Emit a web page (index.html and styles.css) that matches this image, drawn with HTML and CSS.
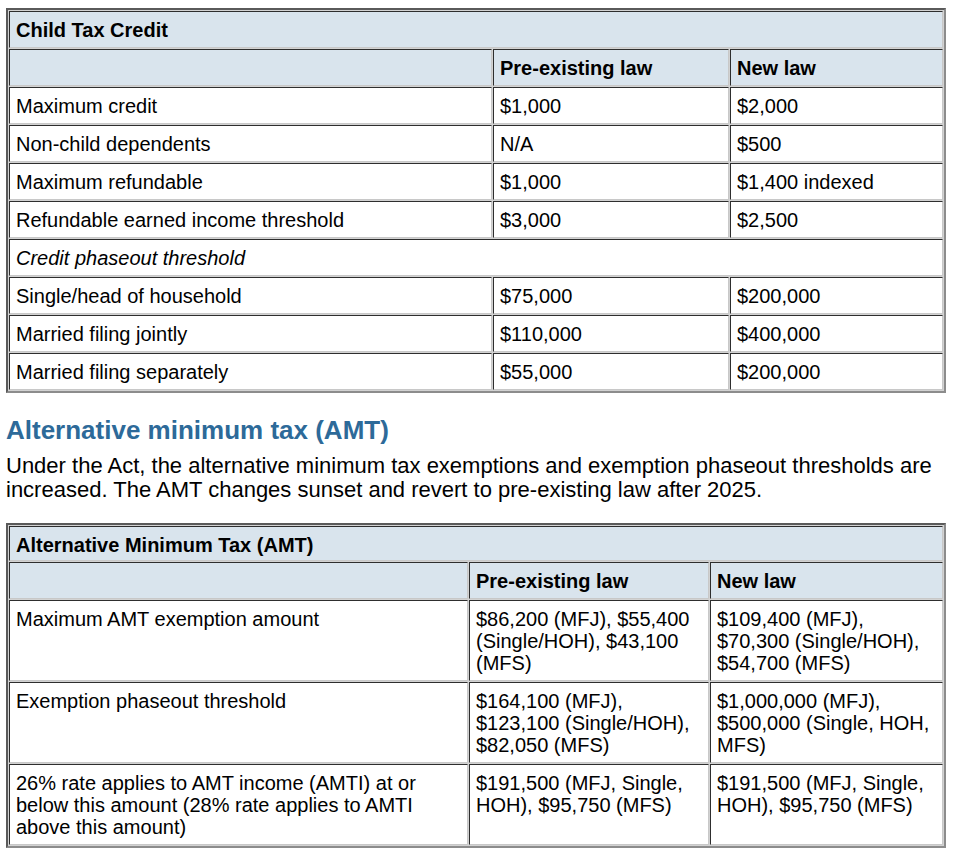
FILE: index.html
```html
<!DOCTYPE html>
<html>
<head>
<meta charset="utf-8">
<link rel="stylesheet" href="styles.css">
</head>
<body>
<div class="page">
  <table class="tax t1">
    <colgroup><col class="c1a"><col class="c2a"><col class="c3a"></colgroup>
    <tr class="head"><td colspan="3" class="title">Child Tax Credit</td></tr>
    <tr class="head"><td></td><td class="th">Pre-existing law</td><td class="th">New law</td></tr>
    <tr><td>Maximum credit</td><td>$1,000</td><td>$2,000</td></tr>
    <tr><td>Non-child dependents</td><td>N/A</td><td>$500</td></tr>
    <tr><td>Maximum refundable</td><td>$1,000</td><td>$1,400 indexed</td></tr>
    <tr><td>Refundable earned income threshold</td><td>$3,000</td><td>$2,500</td></tr>
    <tr><td colspan="3" class="sub">Credit phaseout threshold</td></tr>
    <tr><td>Single/head of household</td><td>$75,000</td><td>$200,000</td></tr>
    <tr><td>Married filing jointly</td><td>$110,000</td><td>$400,000</td></tr>
    <tr><td>Married filing separately</td><td>$55,000</td><td>$200,000</td></tr>
  </table>

  <h2 class="section">Alternative minimum tax (AMT)</h2>
  <p class="intro">Under the Act, the alternative minimum tax exemptions and exemption phaseout thresholds are increased. The AMT changes sunset and revert to pre-existing law after 2025.</p>

  <table class="tax t2">
    <colgroup><col class="c1b"><col class="c2b"><col class="c3b"></colgroup>
    <tr class="head"><td colspan="3" class="title short">Alternative Minimum Tax (AMT)</td></tr>
    <tr class="head"><td></td><td class="th">Pre-existing law</td><td class="th">New law</td></tr>
    <tr><td>Maximum AMT exemption amount</td><td>$86,200 (MFJ), $55,400 (Single/HOH), $43,100 (MFS)</td><td>$109,400 (MFJ), $70,300 (Single/HOH), $54,700 (MFS)</td></tr>
    <tr><td>Exemption phaseout threshold</td><td>$164,100 (MFJ), $123,100 (Single/HOH), $82,050 (MFS)</td><td>$1,000,000 (MFJ), $500,000 (Single, HOH, MFS)</td></tr>
    <tr><td>26% rate applies to AMT income (AMTI) at or below this amount (28% rate applies to AMTI above this amount)</td><td>$191,500 (MFJ, Single, HOH), $95,750 (MFS)</td><td>$191,500 (MFJ, Single, HOH), $95,750 (MFS)</td></tr>
  </table>
</div>
</body>
</html>
```

FILE: styles.css
```css
html, body {
  margin: 0;
  padding: 0;
  background: #ffffff;
}

body {
  font-family: "Liberation Sans", Arial, Helvetica, sans-serif;
  color: #000;
  font-size: 20px;
}

.page {
  padding: 8px 0 0 6px;
  width: 940px;
}

.tax {
  width: 940px;
  table-layout: fixed;
  border-collapse: separate;
  border-spacing: 1px;
  border: 2px solid;
  border-color: #5a5a5a #8c8c8c #8c8c8c #5a5a5a;
  background: #d2d2d2;
}

.c1a { width: 483px; }
.c2a { width: 236px; }
.c3a { width: 213px; }

.c1b { width: 459px; }
.c2b { width: 240px; }
.c3b { width: 233px; }

.tax td {
  border: 1px solid;
  border-color: #2e2e2e #c8c8c8 #c8c8c8 #2e2e2e;
  padding: 7px 6px 6px 6px;
  line-height: 22px;
  vertical-align: top;
  background: #ffffff;
  font-size: 20px;
}

.tax tr.head td {
  background: #d9e4ed;
}

.tax td.title,
.tax td.th {
  font-weight: bold;
}

.tax td.title.short {
  padding-bottom: 4px;
}

.tax td.sub {
  font-style: italic;
}

.section {
  margin: 22px 0 0 0;
  font-size: 26px;
  line-height: 30px;
  font-weight: bold;
  color: #2d6a99;
}

.intro {
  margin: 9px 0 21px 0;
  font-size: 22px;
  line-height: 24px;
}
```
